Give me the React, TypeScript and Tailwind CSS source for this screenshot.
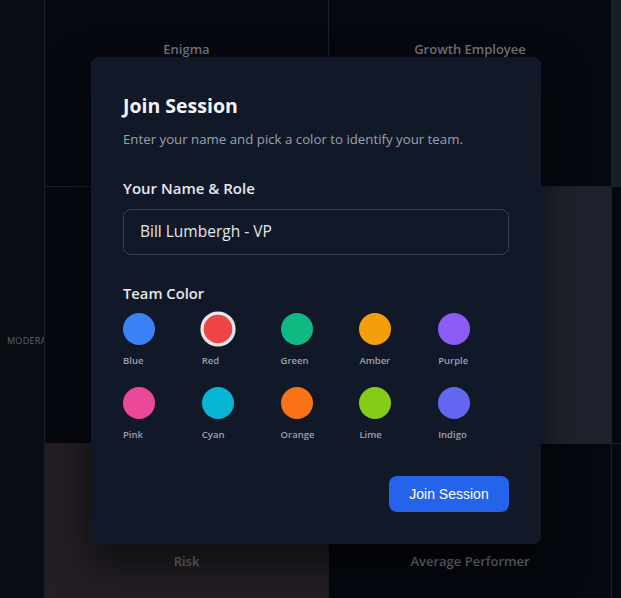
import React from "react";

const swatches = [
  { name: "Blue", cls: "bg-[#3b82f6]" },
  { name: "Red", cls: "bg-[#ef4444]" },
  { name: "Green", cls: "bg-[#10b981]" },
  { name: "Amber", cls: "bg-[#f59e0b]" },
  { name: "Purple", cls: "bg-[#8b5cf6]" },
  { name: "Pink", cls: "bg-[#ec4899]" },
  { name: "Cyan", cls: "bg-[#06b6d4]" },
  { name: "Orange", cls: "bg-[#f97316]" },
  { name: "Lime", cls: "bg-[#84cc16]" },
  { name: "Indigo", cls: "bg-[#6366f1]" },
];

function CellLabel({ text }: { text: string }) {
  return <span className="text-[13px] font-semibold leading-[18px] text-[#72767e]">{text}</span>;
}

export default function App() {
  return (
    <div
      className="relative h-[598px] w-[621px] overflow-hidden bg-[#0a0d14]"
      style={{ fontFamily: "'Open Sans', 'Noto Sans', sans-serif" }}
    >
      {/* background grid */}
      <div className="flex h-full">
        <div className="flex w-[45px] shrink-0 flex-col justify-center overflow-hidden border-r border-[#1b1f28] bg-[#0a0d14] pl-[7px] pt-[84px]">
          <span className="whitespace-nowrap text-[9px] leading-[12px] tracking-[0.03em] text-[#5e626a]">MODERATE</span>
        </div>
        <div className="grid flex-1 grid-cols-[283px_282px_1fr] grid-rows-[186px_256px_1fr] gap-px bg-[#1b1f28]">
          <div className="flex justify-center bg-[#05080f] pt-[40px]">
            <CellLabel text="Enigma" />
          </div>
          <div className="flex justify-center bg-[#05080f] pt-[40px]">
            <CellLabel text="Growth Employee" />
          </div>
          <div className="bg-[#172024]" />
          <div className="bg-[#05080f]" />
          <div className="bg-[#1e222c]" />
          <div className="bg-[#05080f]" />
          <div className="flex justify-center bg-[#231f25] pt-[108px]">
            <CellLabel text="Risk" />
          </div>
          <div className="flex justify-center bg-[#05080f] pt-[108px]">
            <CellLabel text="Average Performer" />
          </div>
          <div className="bg-[#05080f]" />
        </div>
      </div>

      {/* modal */}
      <div className="absolute left-[91px] top-[57px] w-[450px] rounded-lg bg-[#111827] p-8 shadow-[0_20px_40px_rgba(0,0,0,0.6)]">
        <h2 className="mt-[3px] text-[19.5px] font-bold leading-7 text-gray-100">Join Session</h2>
        <p className="mt-[9px] text-[13.25px] leading-5 text-gray-400">Enter your name and pick a color to identify your team.</p>

        <label className="mt-[27px] block text-[15px] font-semibold leading-6 text-gray-200">Your Name &amp; Role</label>
        <div className="mt-[9px] flex h-[46px] items-center rounded-lg border border-[#374151] bg-[#111827] px-4 text-[15.5px] text-gray-200">
          Bill Lumbergh - VP
        </div>

        <div className="mt-[26px] text-[14.75px] font-semibold leading-6 text-gray-200">Team Color</div>
        <div className="mt-[8px] grid grid-cols-5 gap-x-2 gap-y-[19px]">
          {swatches.map((s) => {
            const selected = s.name === "Red";
            return (
              <div key={s.name} className="flex flex-col items-start">
                <div
                  className={
                    selected
                      ? `h-8 w-8 scale-110 rounded-full border-[3px] border-gray-200 ${s.cls}`
                      : `h-8 w-8 rounded-full ${s.cls}`
                  }
                />
                <span className="mt-[9px] text-[9.5px] font-semibold leading-[14px] text-gray-400">{s.name}</span>
              </div>
            );
          })}
        </div>

        <div className="mt-[34px] flex justify-end">
          <button
            className="h-9 w-[120px] rounded-lg bg-[#2563eb] text-sm font-medium text-white"
            style={{ fontFamily: "'Liberation Sans', Arial, sans-serif" }}
          >
            Join Session
          </button>
        </div>
      </div>
    </div>
  );
}
